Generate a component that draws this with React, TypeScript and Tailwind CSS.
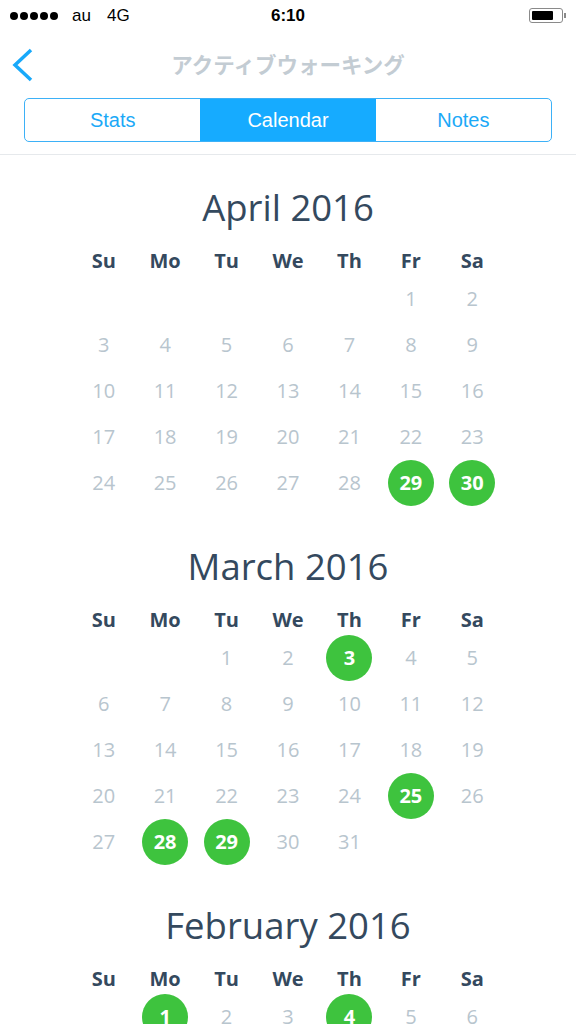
const DAYS = ['Su', 'Mo', 'Tu', 'We', 'Th', 'Fr', 'Sa']

const MONTHS = [
  { title: 'April 2016', start: 5, length: 30, active: [29, 30] },
  { title: 'March 2016', start: 2, length: 31, active: [3, 25, 28, 29] },
  { title: 'February 2016', start: 1, length: 29, active: [1, 4] },
]

function StatusBar() {
  return (
    <div className="relative h-[31px] flex items-center px-[10px] font-['Liberation_Sans',Arial,sans-serif] text-[17px] text-black">
      <div className="flex items-center gap-[2px]">
        {[0, 1, 2, 3, 4].map((i) => (
          <span key={i} className="w-[8px] h-[8px] rounded-full bg-black" />
        ))}
      </div>
      <span className="ml-[14px]">au</span>
      <span className="ml-[16px]">4G</span>
      <span className="absolute left-1/2 -translate-x-1/2 font-semibold">6:10</span>
      <div className="ml-auto flex items-center">
        <div className="w-[34px] h-[15px] rounded-[3px] border border-[#8a8a8a] p-[2px]">
          <div className="w-[21px] h-full bg-black rounded-[1px]" />
        </div>
        <div className="w-[2px] h-[5px] bg-[#8a8a8a] ml-[1px]" />
      </div>
    </div>
  )
}

function Header() {
  return (
    <div className="border-b border-[#e6e9ec] pb-[12px]">
      <StatusBar />
      <div className="relative h-[67px] flex items-center justify-center">
        <svg className="absolute left-[11px] top-[17px]" width="24" height="34" viewBox="0 0 24 34">
          <path d="M20 2 L4 17 L20 32" fill="none" stroke="#18a9fa" strokeWidth="3.5" />
        </svg>
        <span className="font-['Noto_Sans_CJK_JP',sans-serif] font-bold text-[21.5px] text-[#c3ccd3]">
          アクティブウォーキング
        </span>
      </div>
      <div className="mx-[24px] h-[44px] grid grid-cols-3 border-[1.5px] border-[#3db1f7] rounded-[5px] overflow-hidden font-['Liberation_Sans',Arial,sans-serif] text-[20px]">
        <div className="flex items-center justify-center text-[#1ba9f7]">Stats</div>
        <div className="flex items-center justify-center bg-[#16abff] text-white">Calendar</div>
        <div className="flex items-center justify-center text-[#1ba9f7]">Notes</div>
      </div>
    </div>
  )
}

function Month({ title, start, length, active }: { title: string; start: number; length: number; active: number[] }) {
  const cells: (number | null)[] = []
  for (let i = 0; i < start; i++) cells.push(null)
  for (let d = 1; d <= length; d++) cells.push(d)

  return (
    <div className="pb-[35px]">
      <h2 className="h-[50px] leading-[50px] text-center text-[36.5px] text-[#34495e]">{title}</h2>
      <div className="w-[430px] mx-auto mt-[14px] grid grid-cols-7">
        {DAYS.map((d) => (
          <div key={d} className="h-[30px] flex items-center justify-center text-[20px] font-bold text-[#34495e]">
            {d}
          </div>
        ))}
        {cells.map((d, i) => (
          <div key={i} className="h-[46px] flex items-center justify-center text-[20px]">
            {d === null ? null : active.includes(d) ? (
              <span className="w-[46px] h-[46px] rounded-full bg-[#3ec33e] text-white font-bold flex items-center justify-center">
                {d}
              </span>
            ) : (
              <span className="text-[#b8c5ce]">{d}</span>
            )}
          </div>
        ))}
      </div>
    </div>
  )
}

export default function App() {
  return (
    <div className="w-[576px] h-[1024px] overflow-hidden bg-white font-['Open_Sans',sans-serif]">
      <Header />
      <div className="pt-[27px]">
        {MONTHS.map((m) => (
          <Month key={m.title} {...m} />
        ))}
      </div>
    </div>
  )
}
